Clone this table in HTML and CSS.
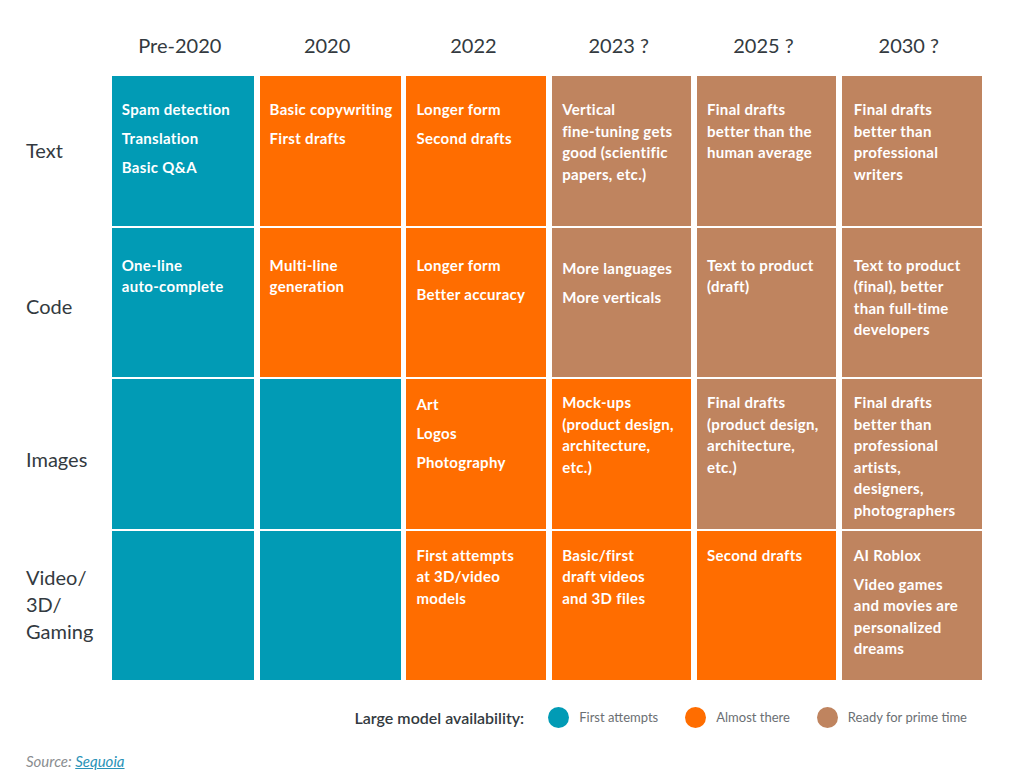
FILE: index.html
```html
<!DOCTYPE html>
<html lang="en">
<head>
<meta charset="utf-8">
<title>Generative AI application landscape timeline</title>
<link rel="stylesheet" href="styles.css">
</head>
<body>
<main class="chart">
  <div class="head">
    <div></div>
    <div class="year">Pre-2020</div>
    <div class="year">2020</div>
    <div class="year">2022</div>
    <div class="year">2023 ?</div>
    <div class="year">2025 ?</div>
    <div class="year">2030 ?</div>
  </div>
  <div class="grid">
    <div class="label r1">Text</div>
    <div class="cell teal r1"><p>Spam detection</p><p>Translation</p><p>Basic Q&amp;A</p></div>
    <div class="cell orange r1"><p>Basic copywriting</p><p>First drafts</p></div>
    <div class="cell orange r1"><p>Longer form</p><p>Second drafts</p></div>
    <div class="cell brown r1"><p>Vertical<br>fine-tuning gets<br>good (scientific<br>papers, etc.)</p></div>
    <div class="cell brown r1"><p>Final drafts<br>better than the<br>human average</p></div>
    <div class="cell brown r1 last"><p>Final drafts<br>better than<br>professional<br>writers</p></div>

    <div class="label r2">Code</div>
    <div class="cell teal r2"><p>One-line<br>auto-complete</p></div>
    <div class="cell orange r2"><p>Multi-line<br>generation</p></div>
    <div class="cell orange r2"><p>Longer form</p><p>Better accuracy</p></div>
    <div class="cell brown r2 low"><p>More languages</p><p>More verticals</p></div>
    <div class="cell brown r2"><p>Text to product<br>(draft)</p></div>
    <div class="cell brown r2 last"><p>Text to product<br>(final), better<br>than full-time<br>developers</p></div>

    <div class="label r3">Images</div>
    <div class="cell teal r3"></div>
    <div class="cell teal r3"></div>
    <div class="cell orange r3 low"><p>Art</p><p>Logos</p><p>Photography</p></div>
    <div class="cell orange r3"><p>Mock-ups<br>(product design,<br>architecture,<br>etc.)</p></div>
    <div class="cell brown r3"><p>Final drafts<br>(product design,<br>architecture,<br>etc.)</p></div>
    <div class="cell brown r3 last"><p>Final drafts<br>better than<br>professional<br>artists,<br>designers,<br>photographers</p></div>

    <div class="label r4">Video/<br>3D/<br>Gaming</div>
    <div class="cell teal r4"></div>
    <div class="cell teal r4"></div>
    <div class="cell orange r4"><p>First attempts<br>at 3D/video<br>models</p></div>
    <div class="cell orange r4"><p>Basic/first<br>draft videos<br>and 3D files</p></div>
    <div class="cell orange r4"><p>Second drafts</p></div>
    <div class="cell brown r4 last"><p>AI Roblox</p><p>Video games<br>and movies are<br>personalized<br>dreams</p></div>
  </div>

  <div class="legend">
    <span class="legend-title">Large model availability:</span>
    <span class="key"><span class="dot teal"></span>First attempts</span>
    <span class="key"><span class="dot orange"></span>Almost there</span>
    <span class="key"><span class="dot brown"></span>Ready for prime time</span>
  </div>

  <p class="source">Source: <a href="#">Sequoia</a></p>
</main>
</body>
</html>
```

FILE: styles.css
```css
* { box-sizing: border-box; }

html, body {
  margin: 0;
  padding: 0;
  background: #ffffff;
}

body {
  font-family: Lato, "Noto Sans", sans-serif;
  color: #333a40;
}

.chart {
  padding: 28px 0 0 26px;
  width: 1024px;
}

.head,
.grid {
  display: grid;
  grid-template-columns: 80px 142px 141px 140px 139px 139px 140px;
  column-gap: 5.8px;
}

.head {
  height: 34px;
  margin-bottom: 14px;
}

.year {
  font-size: 20px;
  line-height: 34px;
  text-align: center;
  color: #333a40;
  padding-right: 6px;
}

.grid {
  grid-template-rows: repeat(4, 149.5px);
  row-gap: 2px;
}

.label {
  font-size: 20px;
  line-height: 27px;
  color: #333a40;
  display: flex;
  align-items: center;
}

.label.r2 { padding-top: 8px; }
.label.r3 { padding-top: 12px; }
.label.r4 { padding-bottom: 2px; }

.cell {
  color: #ffffff;
  font-weight: 700;
  font-size: 15px;
  line-height: 21.5px;
  padding: 23px 4px 0 10px;
  letter-spacing: 0.3px;
}

.cell.last { padding-left: 12px; }

.cell p {
  margin: 0 0 7.5px 0;
}

.cell.r2 { padding-top: 27px; }
.cell.r3 { padding-top: 13px; }
.cell.r4 { padding-top: 14px; }
.cell.r2.low { padding-top: 30px; }
.cell.r3.low { padding-top: 15px; }

.teal { background: #019bb5; }
.orange { background: #ff6d00; }
.brown { background: #bf845f; }

.legend {
  display: flex;
  align-items: center;
  justify-content: flex-end;
  width: 956px;
  padding-right: 15px;
  margin-top: 26px;
  height: 22px;
}

.legend-title {
  font-weight: 600;
  font-size: 16px;
  color: #333a40;
  margin-right: 24px;
}

.key {
  display: flex;
  align-items: center;
  font-size: 13px;
  color: #6b6f73;
  margin-left: 27px;
}

.legend-title + .key { margin-left: 0; }

.dot {
  width: 21px;
  height: 21px;
  border-radius: 50%;
  margin-right: 10px;
}

.source {
  margin: 24px 0 0 0;
  font-size: 15px;
  font-style: italic;
  color: #8a8d90;
}

.source a {
  color: #2a93b8;
  text-decoration: underline;
}
```
